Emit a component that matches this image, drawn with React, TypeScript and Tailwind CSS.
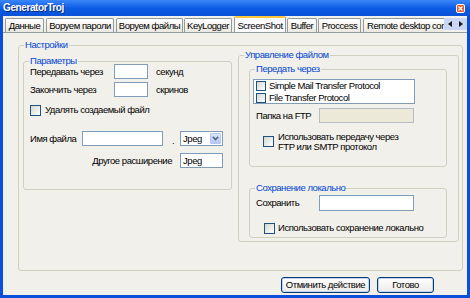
import React from "react";

function Check({ size = "w-[11px] h-[11px]", className = "" }: { size?: string; className?: string }) {
  return (
    <span
      className={`block shrink-0 border border-[#1c5180] bg-linear-to-br from-[#d6d6ce] to-white ${size} ${className}`}
    />
  );
}

function Input({ className = "", children }: { className?: string; children?: React.ReactNode }) {
  return (
    <div className={`h-[15px] border border-[#7f9db9] bg-white flex items-center pl-[2px] shrink-0 ${className}`}>
      {children}
    </div>
  );
}

function Group({
  title,
  className = "",
  children,
}: {
  title: string;
  className?: string;
  children?: React.ReactNode;
}) {
  return (
    <fieldset className={`border border-[#d0d0bf] rounded-[3px] shrink-0 ${className}`}>
      <legend className="ml-[5px] px-[1px] leading-[10px] text-[#0046d5]">{title}</legend>
      {children}
    </fieldset>
  );
}

function Tab({ label, className = "", active = false }: { label: string; className?: string; active?: boolean }) {
  if (active) {
    return (
      <div
        className={`relative z-10 h-[17px] -mb-[1px] shrink-0 flex items-center justify-center border-x border-[#919b9c] border-t-2 border-t-[#ffc83c] bg-[#fcfcfe] rounded-t-[2px] whitespace-nowrap ${className}`}
      >
        {label}
      </div>
    );
  }
  return (
    <div
      className={`h-[14px] shrink-0 flex items-center justify-center border border-b-0 border-[#919b9c] rounded-t-[2px] bg-linear-to-b from-white to-[#eae8e0] whitespace-nowrap ${className}`}
    >
      {label}
    </div>
  );
}

function Button({ label, className = "" }: { label: string; className?: string }) {
  return (
    <div
      className={`h-[16px] flex items-center justify-center border border-[#003c74] rounded-[3px] bg-linear-to-b from-white to-[#ecebe6] shadow-[inset_0_0_0_1px_#c2d4f6] whitespace-nowrap ${className}`}
    >
      {label}
    </div>
  );
}

export default function App() {
  return (
    <div className="w-[470px] h-[298px] flex flex-col overflow-hidden bg-[#0a4fdb] text-[9.5px] tracking-[-0.45px] leading-[12px] text-black font-['Liberation_Sans',Arial,sans-serif]">
      {/* title bar */}
      <div className="h-[16px] shrink-0 flex items-center justify-between pl-[3px] pr-[5px] bg-linear-to-b from-[#3a86f7] via-[#0c5ce6] to-[#0a52d6]">
        <span className="text-white font-bold text-[10px] tracking-[-0.4px] [text-shadow:1px_1px_0_#0a2a80]">GeneratorTroj</span>
        <span className="w-[9px] h-[9px] rounded-[2px] border border-white bg-[#e2582f] flex items-center justify-center">
          <svg width="5" height="5" viewBox="0 0 5 5">
            <path d="M0.5 0.5 L4.5 4.5 M4.5 0.5 L0.5 4.5" stroke="white" strokeWidth="1.2" />
          </svg>
        </span>
      </div>

      <div className="flex-1 flex flex-col mx-[3px] mb-[3px] bg-[#f2f0ea]">
        {/* tabs */}
        <div className="h-[16px] shrink-0 flex items-end">
          <div className="w-[440px] ml-[2px] flex items-end overflow-hidden">
            <Tab label="Данные" className="w-[39px]" />
            <Tab label="Воруем пароли" className="w-[68px] ml-[2px]" />
            <Tab label="Воруем файлы" className="w-[67px] ml-[2px]" />
            <Tab label="KeyLogger" className="w-[48px] ml-[1px]" />
            <Tab label="ScreenShot" active className="w-[52px] ml-[2px]" />
            <Tab label="Buffer" className="w-[30px] ml-[1px]" />
            <Tab label="Proccess" className="w-[43px] ml-[1px]" />
            <Tab label="Remote desktop control" className="w-[110px] ml-[2px] !justify-start pl-[3px]" />
          </div>
          <div className="w-[23px] h-[12px] mb-[2px] flex items-center justify-around bg-[#c9d7f5]">
            <svg width="4" height="6" viewBox="0 0 4 6">
              <path d="M4 0 L0 3 L4 6 Z" fill="#1a1a1a" />
            </svg>
            <svg width="4" height="6" viewBox="0 0 4 6">
              <path d="M0 0 L4 3 L0 6 Z" fill="#1a1a1a" />
            </svg>
          </div>
        </div>

        {/* tab page */}
        <div className="h-[240px] shrink-0 border-t border-[#919b9c]">
          <Group title="Настройки" className="mt-[7px] ml-[15px] mr-[4px] h-[231px]">
            <div className="flex items-start">
              {/* Параметры */}
              <Group title="Параметры" className="ml-[4px] mt-[6px] w-[209px] h-[134px]">
                <div className="pl-[6px] -mt-[2px]">
                  <div className="flex items-center h-[15px]">
                    <span className="w-[84px] whitespace-nowrap">Передавать через</span>
                    <Input className="w-[34px]" />
                    <span className="ml-[8px]">секунд</span>
                  </div>
                  <div className="flex items-center h-[15px] mt-[3px]">
                    <span className="w-[84px] whitespace-nowrap">Закончить через</span>
                    <Input className="w-[34px]" />
                    <span className="ml-[8px]">скринов</span>
                  </div>
                  <div className="flex items-center mt-[7px]">
                    <Check />
                    <span className="ml-[4px]">Удалять создаемый файл</span>
                  </div>
                  <div className="flex items-center h-[15px] mt-[15px]">
                    <span className="w-[52px] whitespace-nowrap">Имя файла</span>
                    <Input className="w-[81px]" />
                    <span className="ml-[9px] w-[8px] self-end leading-[10px]">.</span>
                    <div className="w-[43px] h-[15px] border border-[#7f9db9] bg-white flex items-center justify-between pl-[2px] pr-[1px]">
                      <span>Jpeg</span>
                      <span className="w-[11px] h-[11px] rounded-[1px] border border-[#b6c8f2] bg-linear-to-b from-[#dbe6fd] to-[#b4c7f4] flex items-center justify-center">
                        <svg width="7" height="5" viewBox="0 0 7 5">
                          <path d="M0.8 0.8 L3.5 3.6 L6.2 0.8" fill="none" stroke="#4d6185" strokeWidth="1.5" />
                        </svg>
                      </span>
                    </div>
                  </div>
                  <div className="flex items-center h-[15px] mt-[7px]">
                    <span className="w-[150px] text-right pr-[8px] whitespace-nowrap">Другое расширение</span>
                    <Input className="w-[43px]">Jpeg</Input>
                  </div>
                </div>
              </Group>

              {/* Управление файлом */}
              <Group title="Управление файлом" className="ml-[6px] w-[221px] h-[192px]">
                <Group title="Передать через" className="ml-[10px] mt-[4px] w-[198px] h-[103px]">
                  <div className="ml-[3px] mt-[5px] w-[162px] h-[25px] border border-[#7f9db9] bg-white pl-[2px]">
                    <div className="flex items-center h-[12px]">
                      <Check size="w-[10px] h-[10px]" />
                      <span className="ml-[3px] whitespace-nowrap">Simple Mail Transfer Protocol</span>
                    </div>
                    <div className="flex items-center h-[12px]">
                      <Check size="w-[10px] h-[10px]" />
                      <span className="ml-[3px] whitespace-nowrap">File Transfer Protocol</span>
                    </div>
                  </div>
                  <div className="flex items-center mt-[4px] pl-[6px]">
                    <span className="w-[63px] whitespace-nowrap">Папка на FTP</span>
                    <div className="w-[95px] h-[15px] border border-[#b5bcc7] bg-[#ece9d8]" />
                  </div>
                  <div className="flex items-start mt-[9px] pl-[13px]">
                    <Check className="mt-[4px]" />
                    <span className="ml-[4px] leading-[10px] whitespace-nowrap">
                      Использовать передачу через
                      <br />
                      FTP или SMTP протокол
                    </span>
                  </div>
                </Group>

                <Group title="Сохранение локально" className="ml-[10px] mt-[16px] w-[198px] h-[55px]">
                  <div className="flex items-center mt-[2px] pl-[6px]">
                    <span className="w-[63px]">Сохранить</span>
                    <Input className="w-[95px] !h-[16px]" />
                  </div>
                  <div className="flex items-center mt-[11px] pl-[14px]">
                    <Check />
                    <span className="ml-[3px] whitespace-nowrap">Использовать сохранение локально</span>
                  </div>
                </Group>
              </Group>
            </div>
          </Group>
        </div>

        {/* buttons */}
        <div className="flex justify-end gap-[7px] pr-[33px] mt-[5px]">
          <Button label="Отминить действие" className="w-[89px]" />
          <Button label="Готово" className="w-[57px]" />
        </div>
      </div>
    </div>
  );
}
